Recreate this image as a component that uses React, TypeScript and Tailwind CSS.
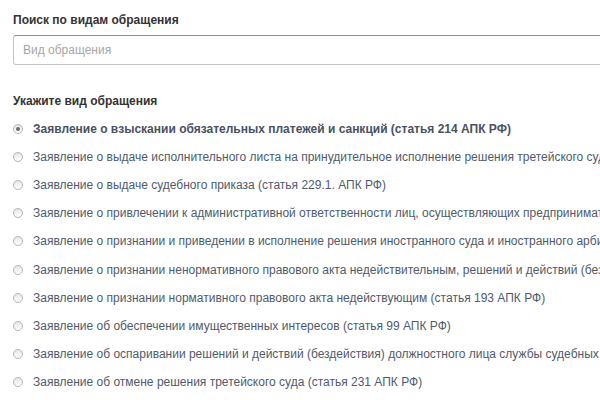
import React from 'react';

const items = [
  'Заявление о взыскании обязательных платежей и санкций (статья 214 АПК РФ)',
  'Заявление о выдаче исполнительного листа на принудительное исполнение решения третейского суда (статья 237 АПК РФ)',
  'Заявление о выдаче судебного приказа (статья 229.1. АПК РФ)',
  'Заявление о привлечении к административной ответственности лиц, осуществляющих предпринимательскую деятельность',
  'Заявление о признании и приведении в исполнение решения иностранного суда и иностранного арбитражного решения',
  'Заявление о признании ненормативного правового акта недействительным, решений и действий (бездействия) незаконными',
  'Заявление о признании нормативного правового акта недействующим (статья 193 АПК РФ)',
  'Заявление об обеспечении имущественных интересов (статья 99 АПК РФ)',
  'Заявление об оспаривании решений и действий (бездействия) должностного лица службы судебных приставов',
  'Заявление об отмене решения третейского суда (статья 231 АПК РФ)',
];

const Radio: React.FC<{ checked?: boolean }> = ({ checked }) => (
  <span className="flex items-center justify-center w-[10px] h-[10px] rounded-full border border-[#b5b5b5] bg-gradient-to-b from-[#e6e6e6] to-white shrink-0">
    {checked && <span className="w-[4px] h-[4px] rounded-full bg-[#6b6b6b]" />}
  </span>
);

export default function App() {
  return (
    <div className="w-[600px] h-[400px] overflow-hidden bg-white font-['Liberation_Sans',Arial,sans-serif] text-[12px]">
      <div className="pl-[13px] pt-[13px]">
        {/* Search */}
        <div className="font-bold text-[#333] leading-[14px]">Поиск по видам обращения</div>
        <div className="mt-[8px] w-[620px] h-[30px] border border-[#c4c4c4] border-t-[#8f8f8f] rounded-[3px] flex items-center pl-[9px] text-[#a6a6a6]">
          Вид обращения
        </div>

        {/* Types */}
        <div className="mt-[29px] font-bold text-[#333] leading-[14px]">Укажите вид обращения</div>
        <div className="mt-[7px] flex flex-col">
          {items.map((t, i) => (
            <div key={i} className="flex items-center h-[28.1px] whitespace-nowrap">
              <span className="w-[20px] shrink-0 flex">
                <Radio checked={i === 0} />
              </span>
              <span className={i === 0 ? 'font-bold text-[#4a5162]' : 'text-[#505a6c]'}>{t}</span>
            </div>
          ))}
        </div>
      </div>
    </div>
  );
}
